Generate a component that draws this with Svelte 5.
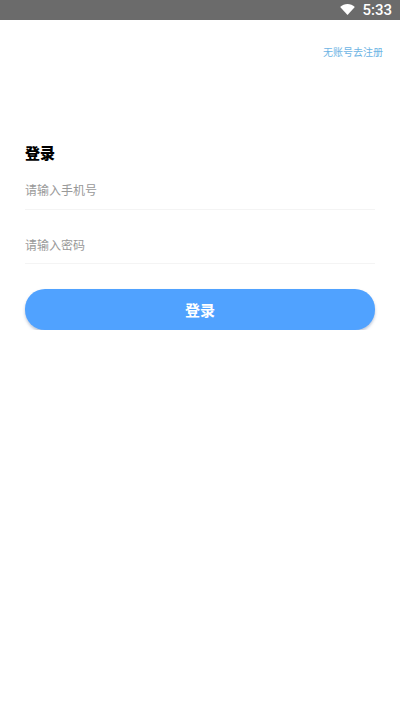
<script>
	let phone = $state("")
	let password = $state("")
</script>

<div class="statusbar">
	<svg class="wifi" viewBox="0 0 16 12" width="15" height="11">
		<path d="M0 3.200C2.200 1.200 5 0 8 0s5.800 1.200 8 3.200L8 12z" fill="#fff" />
	</svg>
	<span class="time">5:33</span>
</div>

<div class="page">
	<div class="toplink">
		<span class="register">无账号去注册</span>
	</div>

	<h1 class="title">登录</h1>

	<div class="field">
		<input type="text" placeholder="请输入手机号" bind:value={phone} />
	</div>
	<div class="field">
		<input type="password" placeholder="请输入密码" bind:value={password} />
	</div>

	<button class="submit">登录</button>
</div>

<style>
	:global(body) {
		background: #fff;
		font-family: "Noto Sans CJK SC", "Liberation Sans", sans-serif;
	}

	.statusbar {
		height: 20px;
		background: #6b6b6b;
		display: flex;
		align-items: center;
		justify-content: flex-end;
		gap: 7px;
		padding-right: 8px;
	}

	.wifi {
		margin-top: -2px;
	}

	.time {
		color: #fff;
		font-family: Roboto, sans-serif;
		font-size: 15px;
		font-weight: 500;
		line-height: 20px;
	}

	.page {
		padding: 0 25px;
	}

	.toplink {
		display: flex;
		justify-content: flex-end;
		margin-right: -8px;
		padding-top: 24px;
		height: 21px;
	}

	.register {
		font-size: 10px;
		line-height: 15px;
		color: #6db4e4;
	}

	.title {
		margin: 78px 0 0;
		font-size: 15px;
		line-height: 19px;
		font-weight: 900;
		color: #000;
	}

	.field {
		padding: 20px 0 12px;
		border-bottom: 1px solid #f4f4f4;
	}

	.field + .field {
		margin-top: 6px;
		padding: 21px 0 11px;
	}

	input {
		display: block;
		height: 15px;
		border: none;
		outline: none;
		padding: 0;
		width: 100%;
		font-family: inherit;
		font-size: 12px;
		color: #333;
		background: transparent;
	}

	input::placeholder {
		color: #999;
		opacity: 1;
	}

	.submit {
		display: block;
		width: 100%;
		height: 41px;
		margin-top: 25px;
		border: none;
		border-radius: 20px;
		background: #50a2ff;
		color: #fff;
		font-family: inherit;
		font-size: 15px;
		font-weight: 700;
		box-shadow: 0 2px 3px rgba(60, 90, 140, 0.35);
	}
</style>
